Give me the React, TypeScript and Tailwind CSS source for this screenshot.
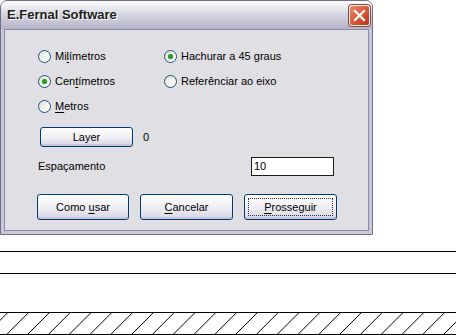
import React from "react";

function Radio({ checked, label, ul }: { checked?: boolean; label: string; ul: number }) {
  return (
    <div className="flex h-[16px] items-center">
      <span className="relative flex h-[13px] w-[13px] items-center justify-center rounded-full border border-[#1c5180] bg-gradient-to-br from-[#dcdcd6] via-[#f4f4f0] to-[#ffffff]">
        {checked && (
          <span className="h-[5px] w-[5px] rounded-full bg-[#21a121] shadow-[0_0_1px_#60c060]" />
        )}
      </span>
      <span className="ml-[4px] whitespace-nowrap">
        {ul < 0 ? (
          label
        ) : (
          <>
            {label.slice(0, ul)}
            <span className="underline underline-offset-[2px]">{label[ul]}</span>
            {label.slice(ul + 1)}
          </>
        )}
      </span>
    </div>
  );
}

function XPButton({
  children,
  focused,
  className,
}: {
  children: React.ReactNode;
  focused?: boolean;
  className?: string;
}) {
  return (
    <div
      className={
        "flex items-center justify-center rounded-[3px] border border-[#003c74] bg-gradient-to-b from-[#ffffff] via-[#f0f0f4] to-[#d8d4e4] shadow-[inset_0_-2px_0_#c8c4d8] " +
        (className ?? "")
      }
    >
      {focused ? (
        <div className="flex h-[calc(100%-6px)] w-[calc(100%-6px)] items-center justify-center border border-dotted border-[#303030]">
          {children}
        </div>
      ) : (
        children
      )}
    </div>
  );
}

export default function App() {
  const hatches: number[] = [];
  for (let k = -1; k < 23; k++) hatches.push(6.7 + k * 20.8);
  return (
    <div
      className="relative h-[335px] w-[456px] overflow-hidden bg-white text-[11px] text-black"
      style={{ fontFamily: '"Liberation Sans", Arial, sans-serif' }}
    >
      {/* Dialog window */}
      <div className="flex h-[235px] w-[373px] flex-col rounded-t-[7px] border border-[#6f6f8c] bg-[#c8c8d8]">
        {/* Title bar */}
        <div className="flex h-[28px] items-center justify-between rounded-t-[6px] bg-gradient-to-b from-[#ffffff] via-[#d4d4e0] to-[#b4b4c8] pl-[6px] pr-[2px]">
          <span className="text-[13px] font-bold text-[#202020] [text-shadow:1px_1px_0_#ffffff]">
            E.Fernal Software
          </span>
          <div className="flex h-[21px] w-[21px] items-center justify-center rounded-[3px] border border-[#f4f4f4] bg-gradient-to-br from-[#e88a70] via-[#d85a3c] to-[#b83218] shadow-[0_0_0_1px_#a04030]">
            <svg width="13" height="13" viewBox="0 0 13 13">
              <path d="M2 2 L11 11 M11 2 L2 11" stroke="#ffffff" strokeWidth="2.2" strokeLinecap="square" />
            </svg>
          </div>
        </div>
        {/* Body */}
        <div className="mx-[3px] mb-[3px] flex flex-1 flex-col border border-[#8a8aa6] bg-[#e0dfe3] pl-[33px]">
          <div className="mt-[18px] grid grid-cols-[126px_1fr] gap-y-[9px]">
            <Radio label="Milímetros" ul={2} />
            <Radio label="Hachurar a 45 graus" checked ul={-1} />
            <Radio label="Centímetros" checked ul={3} />
            <Radio label="Referênciar ao eixo" ul={-1} />
            <Radio label="Metros" ul={0} />
          </div>
          <div className="mt-[13px] flex items-center">
            <XPButton className="ml-[2px] h-[20px] w-[93px]">Layer</XPButton>
            <span className="ml-[10px]">0</span>
          </div>
          <div className="mt-[10px] flex items-center">
            <span className="w-[213px]">Espaçamento</span>
            <div className="flex h-[19px] w-[83px] items-center border border-[#1c1c1c] bg-white pl-[2px]">
              10
            </div>
          </div>
          <div className="mt-[18px] flex gap-[11px]">
            <XPButton className="-ml-[1px] h-[26px] w-[92px]">
              <span>
                Como <span className="underline underline-offset-[2px]">u</span>sar
              </span>
            </XPButton>
            <XPButton className="h-[26px] w-[93px]">
              <span>
                <span className="underline underline-offset-[2px]">C</span>ancelar
              </span>
            </XPButton>
            <XPButton className="h-[26px] w-[93px]" focused>
              <span>
                <span className="underline underline-offset-[2px]">P</span>rosseguir
              </span>
            </XPButton>
          </div>
        </div>
      </div>
      {/* Drawing below */}
      <svg width="456" height="100" viewBox="0 0 456 100" className="block">
        <line x1="0" y1="16.5" x2="456" y2="16.5" stroke="#000" strokeWidth="1" />
        <line x1="0" y1="38.5" x2="456" y2="38.5" stroke="#000" strokeWidth="1" />
        <line x1="0" y1="77.5" x2="456" y2="77.5" stroke="#000" strokeWidth="1" />
        <line x1="0" y1="99.5" x2="456" y2="99.5" stroke="#000" strokeWidth="1" />
        {hatches.map((x, i) => (
          <line key={i} x1={x} y1="99.5" x2={x + 22} y2="77.5" stroke="#000" strokeWidth="1" />
        ))}
      </svg>
    </div>
  );
}
